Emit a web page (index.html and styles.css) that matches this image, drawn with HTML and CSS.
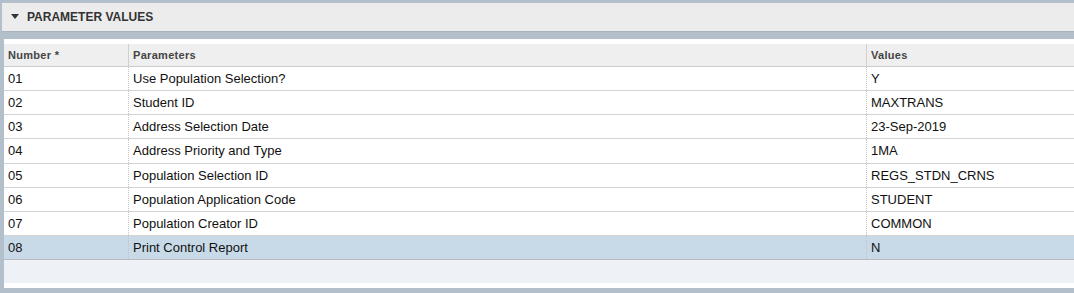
FILE: index.html
```html
<!DOCTYPE html>
<html>
<head>
<meta charset="utf-8">
<link rel="stylesheet" href="styles.css">
</head>
<body>
<div class="page">
  <div class="section-header">
    <span class="caret"></span>
    <span class="title">PARAMETER VALUES</span>
  </div>
  <div class="panel">
    <div class="grid">
      <div class="row head">
        <div class="cell c1">Number *</div>
        <div class="cell c2">Parameters</div>
        <div class="cell c3">Values</div>
      </div>
      <div class="row"><div class="cell c1">01</div><div class="cell c2">Use Population Selection?</div><div class="cell c3">Y</div></div>
      <div class="row"><div class="cell c1">02</div><div class="cell c2">Student ID</div><div class="cell c3">MAXTRANS</div></div>
      <div class="row"><div class="cell c1">03</div><div class="cell c2">Address Selection Date</div><div class="cell c3">23-Sep-2019</div></div>
      <div class="row"><div class="cell c1">04</div><div class="cell c2">Address Priority and Type</div><div class="cell c3">1MA</div></div>
      <div class="row"><div class="cell c1">05</div><div class="cell c2">Population Selection ID</div><div class="cell c3">REGS_STDN_CRNS</div></div>
      <div class="row"><div class="cell c1">06</div><div class="cell c2">Population Application Code</div><div class="cell c3">STUDENT</div></div>
      <div class="row"><div class="cell c1">07</div><div class="cell c2">Population Creator ID</div><div class="cell c3">COMMON</div></div>
      <div class="row selected"><div class="cell c1">08</div><div class="cell c2">Print Control Report</div><div class="cell c3">N</div></div>
      <div class="row empty"></div>
    </div>
  </div>
</div>
</body>
</html>
```
FILE: styles.css
```css
html, body {
  margin: 0;
  padding: 0;
}
body {
  background: #b3bfcb;
  font-family: "Liberation Sans", Arial, sans-serif;
  width: 1074px;
  height: 293px;
  overflow: hidden;
}
.page {
  padding-top: 3px;
}
.section-header {
  margin-left: 2px;
  height: 29px;
  background: #ececec;
  border-bottom: 1px solid #a9b3bd;
  display: flex;
  align-items: center;
  padding-left: 9px;
  box-sizing: border-box;
}
.caret {
  width: 0;
  height: 0;
  border-left: 4px solid transparent;
  border-right: 4px solid transparent;
  border-top: 5px solid #333;
  margin-right: 8px;
  margin-top: -2px;
}
.title {
  font-size: 12px;
  font-weight: bold;
  color: #333;
}
.panel {
  margin: 7px 0 0 4px;
  background: #ffffff;
  padding-top: 5px;
  padding-bottom: 5px;
}
.grid {
  display: flex;
  flex-direction: column;
}
.row {
  display: grid;
  grid-template-columns: 124px 738px 1fr;
  height: 24.14px;
  border-bottom: 1px solid #d3d3d3;
  box-sizing: border-box;
  background: #fff;
}
.row.head {
  height: 23px;
  background: #efefef;
  border-bottom: 1px solid #cccccc;
}
.cell {
  display: flex;
  align-items: center;
  padding-left: 4px;
  font-size: 13px;
  color: #111;
  white-space: nowrap;
}
.row .c2, .row .c3 {
  border-left: 1px dotted #c4c4c4;
}
.row.head .c2, .row.head .c3 {
  border-left: 1px solid #d0d0d0;
}
.row.head .cell {
  font-size: 11px;
  font-weight: bold;
  color: #444;
  letter-spacing: 0.3px;
}
.row.selected {
  background: #c8dae8;
  border-bottom: 1px solid #b8bcc0;
}
.row.empty {
  height: 23px;
  background: #eef1f5;
  border-bottom: none;
}
```
